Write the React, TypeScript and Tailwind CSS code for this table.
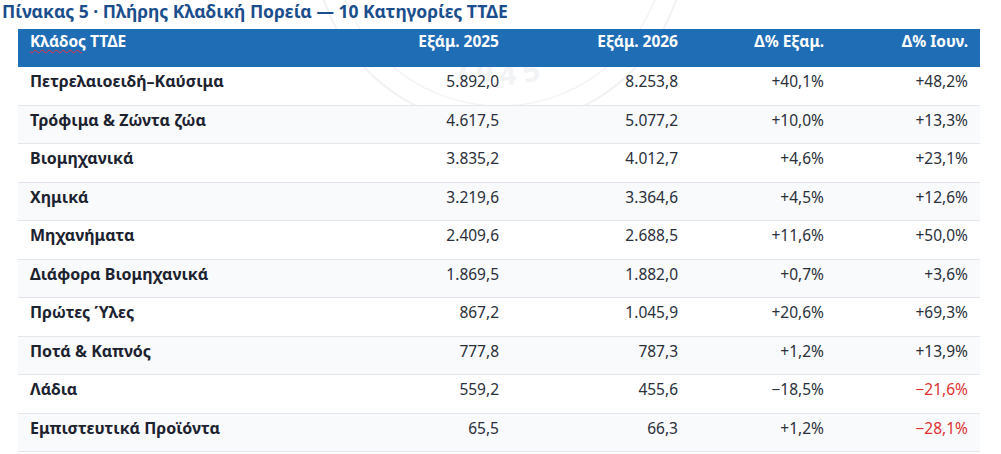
const rows: [string, string, string, string, string][] = [
  ['Πετρελαιοειδή–Καύσιμα', '5.892,0', '8.253,8', '+40,1%', '+48,2%'],
  ['Τρόφιμα & Ζώντα ζώα', '4.617,5', '5.077,2', '+10,0%', '+13,3%'],
  ['Βιομηχανικά', '3.835,2', '4.012,7', '+4,6%', '+23,1%'],
  ['Χημικά', '3.219,6', '3.364,6', '+4,5%', '+12,6%'],
  ['Μηχανήματα', '2.409,6', '2.688,5', '+11,6%', '+50,0%'],
  ['Διάφορα Βιομηχανικά', '1.869,5', '1.882,0', '+0,7%', '+3,6%'],
  ['Πρώτες Ύλες', '867,2', '1.045,9', '+20,6%', '+69,3%'],
  ['Ποτά & Καπνός', '777,8', '787,3', '+1,2%', '+13,9%'],
  ['Λάδια', '559,2', '455,6', '−18,5%', '−21,6%'],
  ['Εμπιστευτικά Προϊόντα', '65,5', '66,3', '+1,2%', '−28,1%'],
];

const cols = 'grid grid-cols-[313px_180px_179px_146px_144px]';

function Seal() {
  // faint stamp behind the table, mostly hidden by the header
  return (
    <svg
      className="pointer-events-none absolute left-[300px] top-[-260px]"
      width="400"
      height="400"
      viewBox="0 0 400 400"
    >
      <defs>
        <path id="seal-arc" d="M 55 200 A 145 145 0 0 0 345 200" />
      </defs>
      <circle cx="200" cy="200" r="186" fill="none" stroke="#f1f2f4" strokeWidth="2" />
      <circle cx="200" cy="200" r="166" fill="none" stroke="#f3f4f6" strokeWidth="1.5" />
      <text
        fontSize="30"
        fontWeight="700"
        fill="#f2f3f5"
        letterSpacing="8"
        style={{ fontFamily: '"Noto Sans", sans-serif' }}
      >
        <textPath href="#seal-arc" startOffset="50%" textAnchor="middle">
          1945
        </textPath>
      </text>
    </svg>
  );
}

export default function App() {
  return (
    <div className="relative h-[454px] w-[1001px] overflow-hidden bg-white font-['Noto_Sans',sans-serif]">
      <Seal />
      <div className="relative">
        <h1 className="pl-[2px] pt-px text-[17.5px] font-bold leading-[20px] text-[#1b4e8d]">
          Πίνακας 5 · Πλήρης Κλαδική Πορεία — 10 Κατηγορίες ΤΤΔΕ
        </h1>

        <div className="ml-[18px] mt-[8px] w-[962px]">
          <div className={`${cols} h-[38px] bg-[#1f6db5] text-[15.5px] font-bold leading-[20px] text-white`}>
            <div className="px-3 pt-[2px]">
              <span className="underline decoration-wavy decoration-red-500 decoration-1 underline-offset-2">
                Κλάδος
              </span>{' '}
              ΤΤΔΕ
            </div>
            <div className="px-3 pt-[2px] text-right">Εξάμ. 2025</div>
            <div className="px-3 pt-[2px] text-right">Εξάμ. 2026</div>
            <div className="px-3 pt-[2px] text-right">Δ% Εξαμ.</div>
            <div className="px-3 pt-[2px] text-right">Δ% Ιουν.</div>
          </div>

          {rows.map(([name, a, b, c, d], i) => (
            <div
              key={name}
              className={`${cols} h-[38.5px] border-b border-[#e3e7ed] leading-[20px] ${
                i % 2 === 1 ? 'bg-[#f8f9fb]/90' : ''
              }`}
            >
              <div className="px-3 pt-[4px] text-[16px] font-bold text-[#1c2230]">{name}</div>
              <div className="px-3 pt-[4px] text-right text-[15.5px] text-[#2a2f3a]">{a}</div>
              <div className="px-3 pt-[4px] text-right text-[15.5px] text-[#2a2f3a]">{b}</div>
              <div className="px-3 pt-[4px] text-right text-[15.5px] text-[#2a2f3a]">{c}</div>
              <div
                className={`px-3 pt-[4px] text-right text-[15.5px] ${
                  d.startsWith('−') ? 'text-[#e03131]' : 'text-[#2a2f3a]'
                }`}
              >
                {d}
              </div>
            </div>
          ))}
        </div>
      </div>
    </div>
  );
}
